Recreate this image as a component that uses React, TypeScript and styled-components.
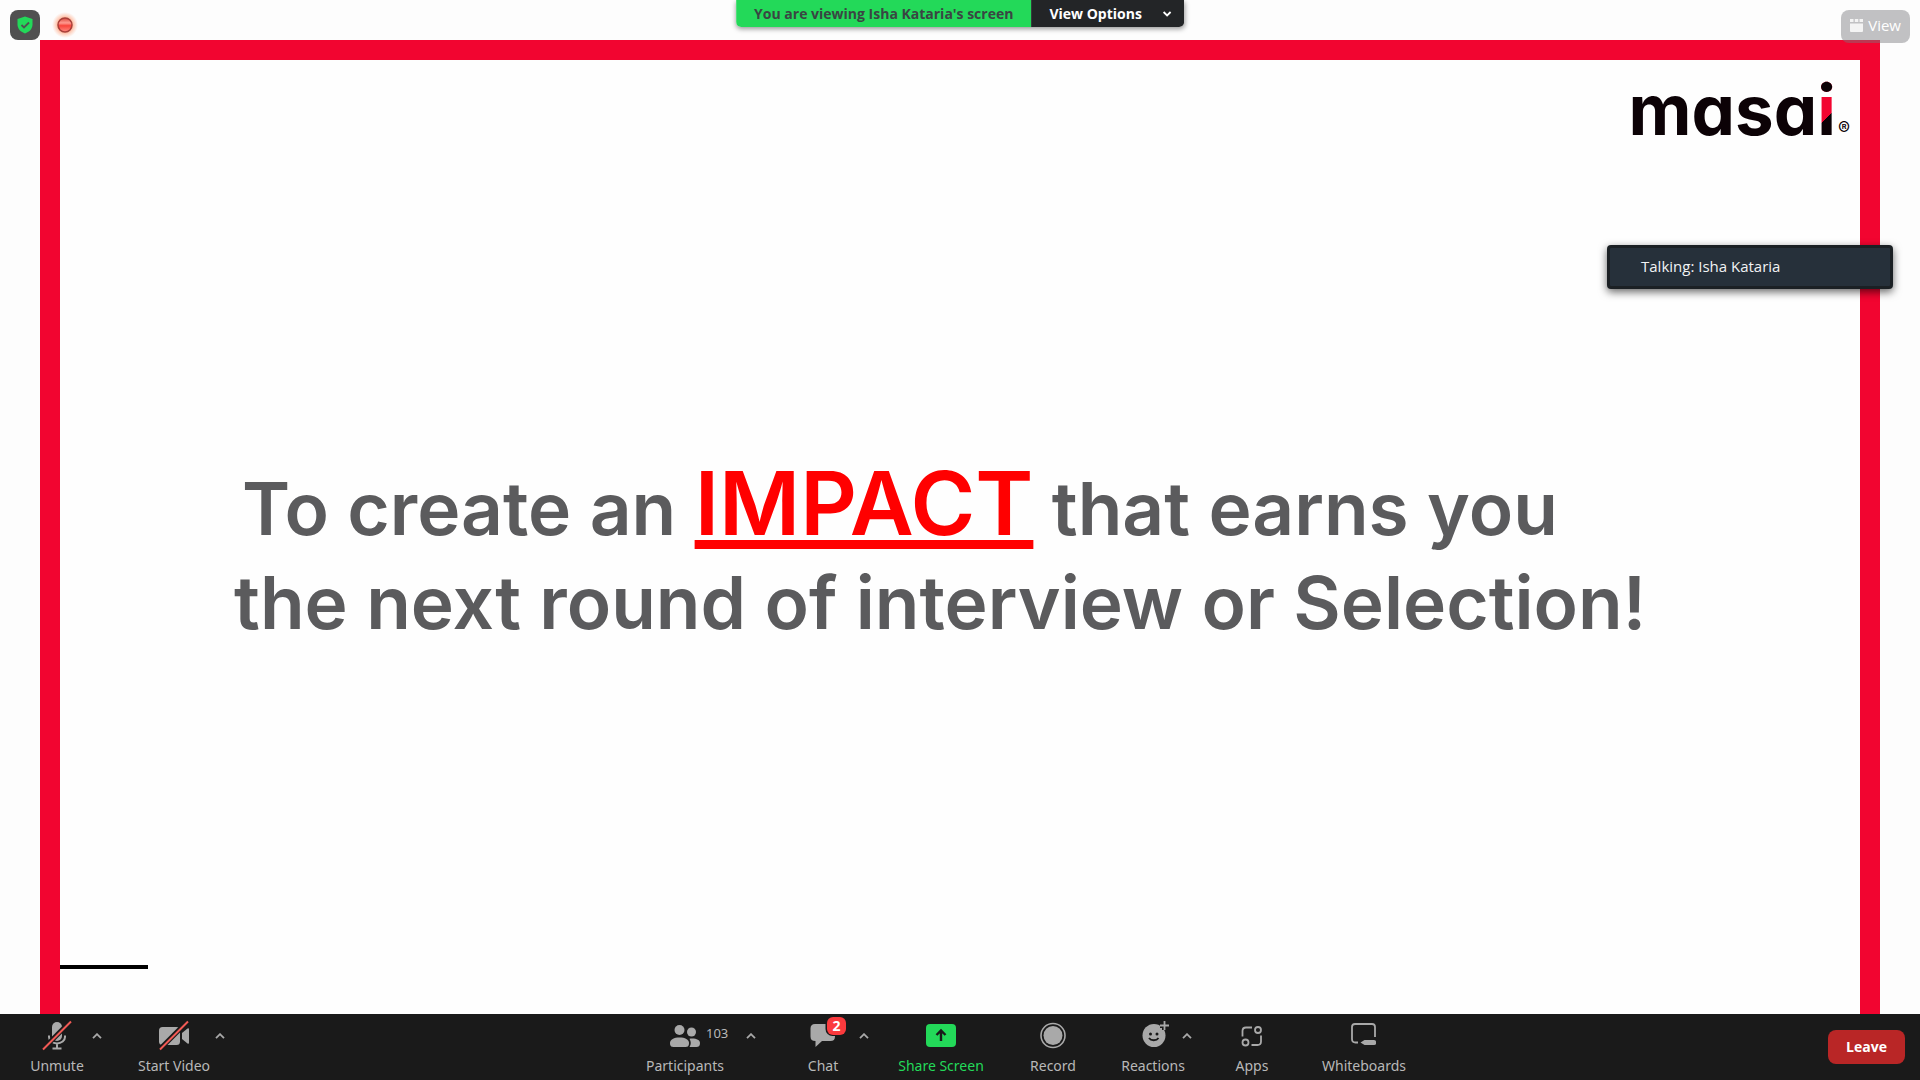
import React from "react";
import styled, { createGlobalStyle } from "styled-components";

const Global = createGlobalStyle`
  * { box-sizing: border-box; }
  body { margin: 0; background: #fdfdfd; font-family: "Open Sans", "Noto Sans", sans-serif; }
  button { border: 0; padding: 0; background: none; font: inherit; color: inherit; cursor: pointer; }
  svg { display: block; }
`;

const Screen = styled.div`
  display: flex;
  flex-direction: column;
  min-height: 100vh;
  background: #fdfdfd;
`;

const Stage = styled.main`
  position: relative;
  flex: 1;
  display: flex;
  padding: 40px 40px 0;
`;

const Slide = styled.section`
  flex: 1;
  display: flex;
  flex-direction: column;
  border: 20px solid #f20530;
  border-bottom: 0;
  background: #fefefe;
  font-family: Inter, sans-serif;
`;

const SlideHeader = styled.header`
  display: flex;
  justify-content: flex-end;
  padding: 18px 10px 0 0;
`;

const Logo = styled.div`
  display: flex;
  align-items: baseline;
  color: #0c0206;
  font-size: 69px;
  line-height: 64px;
  font-weight: 700;
  font-feature-settings: "cv11";
`;

const LogoStem = styled.span`
  background: linear-gradient(to bottom, #0c0206 0 16px, transparent 16px),
    linear-gradient(135deg, #f20530 0 60%, #0c0206 60%);
  -webkit-background-clip: text;
  background-clip: text;
  color: transparent;
`;

const Registered = styled.span`
  margin-left: 2px;
  font-size: 18px;
  font-weight: 400;
`;

const Headline = styled.h1`
  flex: 1;
  display: flex;
  flex-direction: column;
  justify-content: center;
  margin: 0;
  padding: 0 0 14px 174px;
  color: #5b5b5d;
  font-size: 73px;
  line-height: 94px;
  font-weight: 600;
  white-space: nowrap;
`;

const FirstLine = styled.span`
  padding-left: 8px;
`;

const Impact = styled.u`
  color: #ff0000;
  font-size: 88px;
  line-height: 0;
  text-decoration-thickness: 9px;
  text-underline-offset: 5px;
  text-decoration-skip-ink: none;
`;

const SlideFooter = styled.footer`
  padding-bottom: 45px;
`;

const Rule = styled.hr`
  width: 88px;
  height: 4px;
  margin: 0;
  border: 0;
  background: #000;
`;

const Status = styled.div`
  position: absolute;
  top: 10px;
  left: 10px;
  display: flex;
  align-items: center;
  gap: 16px;
`;

const Shield = styled.button`
  display: grid;
  place-items: center;
  width: 30px;
  height: 30px;
  border-radius: 8px;
  background: #505050;
`;

const Banner = styled.div`
  position: absolute;
  top: 0;
  left: 50%;
  transform: translateX(-50%);
  display: flex;
  height: 27px;
  border-radius: 0 0 5px 5px;
  overflow: hidden;
  box-shadow: 0 2px 5px rgba(0, 0, 0, 0.4);
  font-size: 14px;
  font-weight: 700;
  line-height: 27px;
  white-space: nowrap;
`;

const Viewing = styled.span`
  padding: 0 18px;
  background: #23d959;
  color: #3a4543;
`;

const ViewOptions = styled.button`
  display: flex;
  align-items: center;
  gap: 20px;
  padding: 0 12px 0 18px;
  background: #232527;
  color: #fff;
`;

const ViewButton = styled.button`
  position: absolute;
  top: 10px;
  right: 10px;
  display: flex;
  align-items: center;
  gap: 5px;
  height: 33px;
  padding: 0 9px 3px;
  border-radius: 8px;
  background: rgba(120, 120, 124, 0.45);
  color: #fff;
  font-size: 15px;
  line-height: 20px;
`;

const Talking = styled.div`
  position: absolute;
  top: 245px;
  right: 27px;
  width: 286px;
  height: 44px;
  padding-left: 31px;
  border: 3px solid #1b2024;
  border-radius: 4px;
  background: #26303a;
  box-shadow: 0 3px 9px rgba(0, 0, 0, 0.6);
  color: #f2f3f4;
  font-size: 15px;
  line-height: 36px;
`;

const Toolbar = styled.nav`
  display: flex;
  align-items: center;
  justify-content: space-between;
  height: 66px;
  padding: 0 15px 0 25px;
  background: #1a1a1a;
  color: #ababab;
`;

const Group = styled.div<{ $inset?: number }>`
  display: flex;
  gap: 31px;
  padding: 1px ${(p) => p.$inset ?? 0}px 0 0;
`;

const Item = styled.div`
  display: flex;
  align-items: flex-start;
`;

const Tool = styled.button<{ $width: number; $accent?: boolean }>`
  display: flex;
  flex-direction: column;
  align-items: center;
  gap: 4px;
  width: ${(p) => p.$width}px;
  color: ${(p) => (p.$accent ? "#23d959" : "#b8b8b8")};
  font-family: "Noto Sans", sans-serif;
  font-size: 14px;
  line-height: 20px;
  white-space: nowrap;
`;

const IconBox = styled.span`
  position: relative;
  display: grid;
  place-items: center;
  width: 32px;
  height: 32px;
  color: #a9a9a9;
`;

const Count = styled.span`
  position: absolute;
  left: 37px;
  top: 3px;
  color: #b8b8b8;
  font-size: 13px;
`;

const Badge = styled.span`
  position: absolute;
  left: 20px;
  top: -3px;
  width: 19px;
  height: 18px;
  border-radius: 6px;
  background: #fb3a3d;
  color: #fff;
  font-weight: 700;
  line-height: 18px;
  text-align: center;
`;

const Caret = styled.button`
  display: grid;
  place-items: center;
  width: 16px;
  height: 32px;
`;

const Leave = styled.button`
  width: 77px;
  height: 34px;
  padding-bottom: 1px;
  border-radius: 8px;
  background: #b92626;
  color: #fff;
  font-size: 14px;
  font-weight: 700;
`;

const Up = ({ label }: { label: string }) => (
  <Caret aria-label={label}>
    <svg width="10" height="6" viewBox="0 0 10 6" fill="none" stroke="#a9a9a9" strokeWidth="1.8">
      <path d="M1 5.2 5 1.2l4 4" />
    </svg>
  </Caret>
);

const slash = (
  <>
    <path d="M2 29 30 1" stroke="#1a1a1a" strokeWidth="5" />
    <path d="M2 29.500 30 1.500" stroke="#f25a55" strokeWidth="2" />
  </>
);

const MicOff = () => (
  <svg width="32" height="32" viewBox="0 0 32 32" fill="none">
    <rect x="11" y="2" width="10" height="19" rx="5" fill="#a9a9a9" />
    <path d="M8 15.500v1.500a8 6.500 0 0 0 16 0v-1.500M16 23.500V29M11.500 28.500h9" stroke="#a9a9a9" strokeWidth="2" />
    {slash}
  </svg>
);

const VideoOff = () => (
  <svg width="32" height="32" viewBox="0 0 32 32" fill="none">
    <rect x="1" y="7" width="21" height="18" rx="3.500" fill="#a9a9a9" />
    <path d="m24 13 5.500-4.500q1.500-.8 1.500.7v13.600q0 1.500-1.500.7L24 19Z" fill="#a9a9a9" />
    {slash}
  </svg>
);

const People = () => (
  <svg width="32" height="32" viewBox="0 0 32 32" fill="currentColor">
    <circle cx="10.500" cy="10" r="5" />
    <circle cx="22.500" cy="12" r="4.500" />
    <path d="M1 23c0-3.500 4-5.500 9.500-5.500S20 19.500 20 23s-1.500 4-4 4H5c-2.500 0-4-.5-4-4Z" />
    <path d="M20.500 18.700c6-.8 10.500 1 10.500 4.300 0 3-1.500 4-3.500 4H20.500c1.700-2.500 1.700-5.500 0-8.300Z" />
  </svg>
);

const Bubble = () => (
  <svg width="32" height="32" viewBox="0 0 32 32" fill="currentColor">
    <path d="M8 4h14v11h6v1.500c0 3-1.500 4.500-4.500 4.500H15l-6.500 6v-6C5 21 3.500 19.500 3.500 16.500V8.500C3.500 5.500 5 4 8 4Z" />
    <rect x="18.500" y="-5" width="22" height="21" rx="7" fill="#1a1a1a" />
  </svg>
);

const Share = () => (
  <svg width="32" height="32" viewBox="0 0 32 32" fill="none">
    <rect x="1" y="4" width="30" height="23" rx="4" fill="#23d959" />
    <path d="M16 21v-10.500M11.500 15l4.500-4.500 4.500 4.500" stroke="#1a1a1a" strokeWidth="2.400" />
  </svg>
);

const RecordIcon = () => (
  <svg width="32" height="32" viewBox="0 0 32 32" fill="none">
    <circle cx="16" cy="15.500" r="12" stroke="#a9a9a9" strokeWidth="1.600" />
    <circle cx="16" cy="15.500" r="9.500" fill="#a9a9a9" />
  </svg>
);

const Smile = () => (
  <svg width="32" height="32" viewBox="0 0 32 32" fill="none">
    <circle cx="17" cy="15.500" r="11.500" fill="#a9a9a9" />
    <path d="M27.500 1v9M23 5.500h9" stroke="#1a1a1a" strokeWidth="5" />
    <path d="M27.500 1v9M23 5.500h9" stroke="#a9a9a9" strokeWidth="1.800" />
    <circle cx="13.500" cy="14" r="1.500" fill="#1a1a1a" />
    <circle cx="20" cy="14" r="1.500" fill="#1a1a1a" />
    <path d="M12 18c2 3 7.500 3 9.500 0" stroke="#1a1a1a" strokeWidth="1.800" />
  </svg>
);

const AppsIcon = () => (
  <svg width="32" height="32" viewBox="0 0 32 32" fill="none" stroke="#a9a9a9" strokeWidth="1.800">
    <path d="M6.500 16.500v-5.500q0-3.500 3.500-3.500h6M25 15.500v6q0 3.500-3.500 3.500H15.500" />
    <circle cx="22" cy="10" r="3" />
    <circle cx="9.500" cy="22.500" r="3" />
  </svg>
);

const Board = () => (
  <svg width="32" height="32" viewBox="0 0 32 32" fill="none">
    <path d="M10 22.500H7.500q-3.500 0-3.500-3.500V7q0-3 3-3h17q3 0 3 3v10" stroke="#a9a9a9" strokeWidth="1.800" />
    <path d="m12.500 22.500 4-2.500h9.500q2 0 2 1.500v2q0 1.500-2 1.500h-9.500Z" fill="#a9a9a9" />
  </svg>
);

export default function App() {
  return (
    <Screen>
      <Global />
      <Stage>
        <Slide>
          <SlideHeader>
            <Logo>
              <span>masa</span>
              <LogoStem>i</LogoStem>
              <Registered>®</Registered>
            </Logo>
          </SlideHeader>
          <Headline>
            <FirstLine>
              To create an <Impact>IMPACT</Impact> that earns you
            </FirstLine>
            <span>the next round of interview or Selection!</span>
          </Headline>
          <SlideFooter>
            <Rule />
          </SlideFooter>
        </Slide>

        <Status>
          <Shield aria-label="Meeting information">
            <svg width="16" height="18" viewBox="0 0 16 18" fill="none">
              <path d="M8 .5 15.500 3v5.500c0 4.500-3.500 7.500-7.500 9-4-1.500-7.500-4.500-7.500-9V3Z" fill="#23d959" />
              <path d="m4.500 9 2.500 2.500 5-5" stroke="#505050" strokeWidth="1.800" />
            </svg>
          </Shield>
          <svg width="28" height="28" viewBox="0 0 28 28" overflow="visible" role="img" aria-label="Recording">
            <defs>
              <radialGradient id="glow">
                <stop offset="0.5" stopColor="#ff9a70" stopOpacity="0.8" />
                <stop offset="1" stopColor="#ffb090" stopOpacity="0" />
              </radialGradient>
              <linearGradient id="lamp" x1="0" y1="0" x2="0" y2="1">
                <stop offset="0" stopColor="#d8483c" />
                <stop offset="0.35" stopColor="#ff9a90" />
                <stop offset="0.55" stopColor="#f8453c" />
                <stop offset="1" stopColor="#ff8a80" />
              </linearGradient>
            </defs>
            <circle cx="9" cy="14" r="13" fill="url(#glow)" />
            <circle cx="9" cy="14" r="7" fill="url(#lamp)" stroke="#a8403a" strokeWidth="1.500" />
          </svg>
        </Status>

        <Banner>
          <Viewing>You are viewing Isha Kataria's screen</Viewing>
          <ViewOptions>
            View Options
            <svg width="10" height="6" viewBox="0 0 10 6" fill="none" stroke="#fff" strokeWidth="1.800">
              <path d="m1.500 1 3.500 3.500L8.500 1" />
            </svg>
          </ViewOptions>
        </Banner>

        <ViewButton>
          <svg width="13" height="13" viewBox="0 0 13 13" fill="#f4f4f4">
            <path d="M0 0h3.500v3H0zM4.800 0h3.500v3H4.800zM9.500 0H13v3H9.500zM0 4.500h13V12q0 1-1 1H1q-1 0-1-1Z" />
          </svg>
          View
        </ViewButton>

        <Talking>Talking: Isha Kataria</Talking>
      </Stage>

      <Toolbar>
        <Group>
          <Item>
            <Tool $width={64}>
              <IconBox><MicOff /></IconBox>
              Unmute
            </Tool>
            <Up label="Audio options" />
          </Item>
          <Item>
            <Tool $width={76}>
              <IconBox><VideoOff /></IconBox>
              Start Video
            </Tool>
            <Up label="Video options" />
          </Item>
        </Group>
        <Group $inset={10}>
          <Item>
            <Tool $width={116}>
              <IconBox><People /><Count>103</Count></IconBox>
              Participants
            </Tool>
            <Up label="Participant options" />
          </Item>
          <Item>
            <Tool $width={66}>
              <IconBox><Bubble /><Badge>2</Badge></IconBox>
              Chat
            </Tool>
            <Up label="Chat options" />
          </Item>
          <Tool $width={76} $accent>
            <IconBox><Share /></IconBox>
            Share Screen
          </Tool>
          <Tool $width={86}>
            <IconBox><RecordIcon /></IconBox>
            Record
          </Tool>
          <Item>
            <Tool $width={52}>
              <IconBox><Smile /></IconBox>
              Reactions
            </Tool>
            <Up label="Reaction options" />
          </Item>
          <Tool $width={52}>
            <IconBox><AppsIcon /></IconBox>
            Apps
          </Tool>
          <Tool $width={110}>
            <IconBox><Board /></IconBox>
            Whiteboards
          </Tool>
        </Group>
        <Leave>Leave</Leave>
      </Toolbar>
    </Screen>
  );
}
